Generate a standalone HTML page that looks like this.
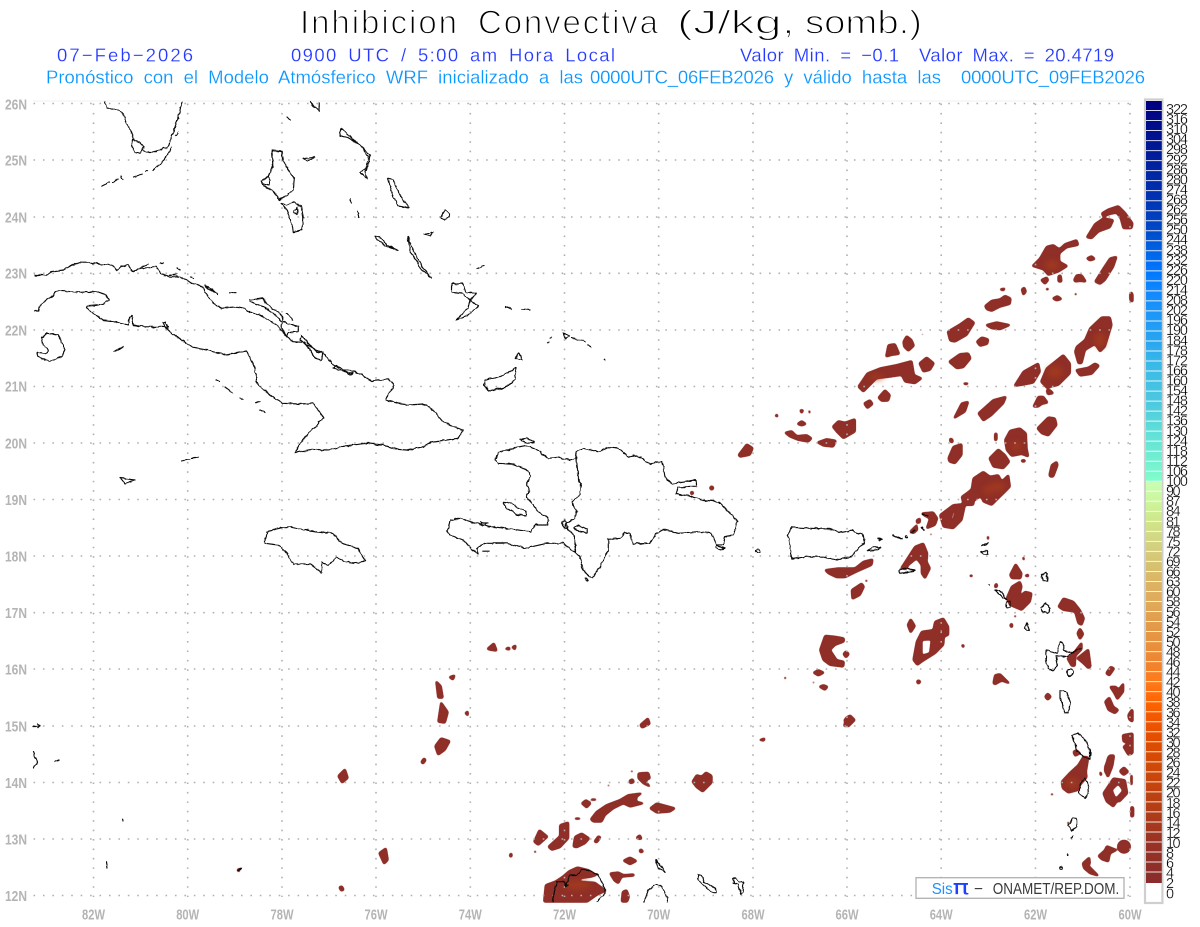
<!DOCTYPE html>
<html lang="es"><head><meta charset="utf-8"><title>Inhibicion Convectiva</title>
<style>html,body{margin:0;padding:0;background:#fff;width:1200px;height:927px;overflow:hidden}svg{display:block;font-family:"Liberation Sans",sans-serif}</style></head>
<body>
<svg width="1200" height="927" viewBox="0 0 1200 927" xmlns="http://www.w3.org/2000/svg">
<defs>
<linearGradient id="cb" gradientUnits="userSpaceOnUse" x1="0" y1="101" x2="0" y2="883">
<stop offset="0" stop-color="#00007f"/><stop offset=".0641" stop-color="#001a98"/><stop offset=".1282" stop-color="#0035b5"/><stop offset=".1667" stop-color="#004ac8"/><stop offset=".1923" stop-color="#0064e8"/><stop offset=".2179" stop-color="#0078ff"/><stop offset=".2436" stop-color="#1088ff"/><stop offset=".2692" stop-color="#1c95f8"/><stop offset=".3077" stop-color="#28a5f0"/><stop offset=".3333" stop-color="#38b8e8"/><stop offset=".3846" stop-color="#4cc8e0"/><stop offset=".4231" stop-color="#60dfd8"/><stop offset=".4615" stop-color="#74f0d0"/><stop offset=".4872" stop-color="#80ffcc"/>
<stop offset=".4872" stop-color="#c8ffb4"/><stop offset=".5128" stop-color="#cdf59c"/><stop offset=".5385" stop-color="#d0e688"/><stop offset=".5641" stop-color="#d3d480"/><stop offset=".5897" stop-color="#d6c472"/><stop offset=".6154" stop-color="#dcb464"/><stop offset=".641" stop-color="#e0aa5a"/><stop offset=".6667" stop-color="#e29c4c"/><stop offset=".6923" stop-color="#e8923e"/><stop offset=".7179" stop-color="#f08430"/><stop offset=".7436" stop-color="#ff7a1a"/><stop offset=".7692" stop-color="#ff6400"/><stop offset=".7949" stop-color="#f05400"/><stop offset=".8205" stop-color="#e04c00"/><stop offset=".8462" stop-color="#d24a06"/><stop offset=".8718" stop-color="#c8440c"/><stop offset=".8974" stop-color="#b83f12"/><stop offset=".9231" stop-color="#a83a1c"/><stop offset=".9487" stop-color="#983224"/><stop offset="1" stop-color="#8a2c2c"/>
</linearGradient>
<filter id="bl" x="-50%" y="-50%" width="200%" height="200%"><feGaussianBlur stdDeviation="3"/></filter>
<filter id="smooth" filterUnits="userSpaceOnUse" x="0" y="90" width="1200" height="837" color-interpolation-filters="sRGB">
<feGaussianBlur stdDeviation="1"/>
<feComponentTransfer><feFuncA type="linear" slope="5" intercept="-.9"/></feComponentTransfer>
</filter>
<filter id="wig" filterUnits="userSpaceOnUse" x="0" y="90" width="1200" height="837" color-interpolation-filters="sRGB">
<feTurbulence type="fractalNoise" baseFrequency=".2" numOctaves="2" seed="3" result="n"/>
<feDisplacementMap in="SourceGraphic" in2="n" scale="3" xChannelSelector="R" yChannelSelector="G"/>
</filter>
</defs>
<rect width="1200" height="927" fill="#fff"/>

<!-- Titles -->
<g font-size="33" fill="#000" stroke="#fff" stroke-width="1.2">
<text x="300" y="33.5" textLength="157">Inhibicion</text>
<text x="478" y="33.5" textLength="180">Convectiva</text>
<text x="677" y="33.5" textLength="118" lengthAdjust="spacingAndGlyphs">(J/kg,</text>
<text x="805" y="33.5" textLength="117" lengthAdjust="spacingAndGlyphs">somb.)</text>
</g>
<g font-size="18.5" fill="#2438ff" stroke="#fff" stroke-width=".2" word-spacing="4">
<text x="57" y="61.5" textLength="136">07−Feb−2026</text>
<text x="291" y="61.5" textLength="324">0900 UTC / 5:00 am Hora Local</text>
<text x="740" y="61.5" textLength="159">Valor Min. = −0.1</text>
<text x="919" y="61.5" textLength="195">Valor Max. = 20.4719</text>
</g>
<g font-size="18.5" fill="#0a96ff" stroke="#fff" stroke-width=".2" word-spacing="5">
<text x="46" y="83.5" textLength="537">Pronóstico con el Modelo Atmósferico WRF inicializado a las</text>
<text x="590" y="83.5" textLength="184">0000UTC_06FEB2026</text>
<text x="784" y="83.5" textLength="157">y válido hasta las</text>
<text x="961" y="83.5" textLength="184">0000UTC_09FEB2026</text>
</g>

<!-- Precip blobs -->
<g filter="url(#smooth)">
<g fill="#8f2f28" stroke="#8f2f28" stroke-linejoin="round">
<g transform="translate(780,200) scale(.33333)" stroke-width="2.5">
<path d="M920 112L945 72 970 55 1000 60 990 82 955 95 935 115ZM965 40L985 28 1015 18 1035 38 1058 70 1055 85 1030 85 1022 55 1010 38 990 42 970 50ZM757 198L780 175 800 140 820 135 838 148 855 132 890 120 895 135 860 142 838 160 838 185 862 198 835 215 805 225 790 208ZM920 175L935 168 945 177 930 182ZM945 245L970 205 990 175 1010 170 1000 200 975 240 960 252ZM783 240L800 232 805 240 795 252ZM835 228L842 225 845 245 835 245ZM882 240L890 225 905 225 918 245 900 243 885 245ZM660 268L675 265 670 272ZM725 268L733 262 738 275 730 285ZM799 266h6v3h-6ZM818 295L832 288 845 297 830 302ZM885 281h4v3h-4ZM1055 285L1058 282 1058 305 1054 298ZM615 318L635 302 660 298 675 287 692 295 690 312 660 320 635 333 620 328ZM618 375L650 367 690 375 660 388 635 385ZM503 395L540 373 565 355 583 368 560 405 525 425 510 422ZM590 425L605 412 625 418 622 432 600 438ZM507 485L540 462 565 460 572 475 550 502 530 505ZM885 455L890 440 915 420 930 385 965 352 990 352 995 375 975 440 960 455 945 432 915 450 905 490 895 490ZM888 510L925 503 945 490 957 497 935 522 900 527ZM783 545L800 505 850 465 870 490 870 520 835 555 800 563ZM703 558L730 515 775 490 780 515 760 548 725 555ZM800 570L810 570 820 580 803 583ZM760 620L775 590 790 590 803 608 785 612 775 620ZM595 640L640 600 678 590 670 610 635 645 610 662ZM522 655L545 610 565 605 555 635ZM772 685L805 652 825 655 830 675 805 707 785 700ZM628 775L655 748 675 765 688 785 670 805 640 800ZM505 775L520 740 545 732 545 765 525 790 508 785ZM510 715L518 718 518 728 510 725ZM645 700L650 700 650 720 645 722ZM725 780L735 780 735 785 725 785ZM808 825L815 795 830 785 833 795 820 830 810 830ZM545 892L575 868 580 835 610 815 630 830 655 825 665 845 685 825 690 860 665 885 635 905 600 890 585 900 560 900ZM235 560L262 520 300 505 350 495 395 483 402 525 425 535 405 550 375 545 365 525 330 530 290 535 250 575ZM318 470L325 435 345 432 358 462 335 465ZM370 425L380 408 395 420 402 437 385 453 372 440ZM418 490L440 472 462 490 450 510 430 515ZM295 593L315 570 330 585 325 602 305 603ZM252 610L270 600 278 612 262 625ZM158 680L175 663 195 668 225 657 225 695 190 715 170 695ZM15 698L35 693 50 708 80 705 95 715 85 725 55 720 30 710ZM112 727L140 717 168 722 160 740 130 737ZM52 672L65 663 78 672 65 677ZM60 630L70 630 65 640ZM88 630L90 640 87 638ZM426 402h3v2h-3ZM550 550L565 550 558 554Z"/>
<path fill-rule="evenodd" d="M675 720L690 692 720 685 738 700 740 745 745 770 725 762 695 768 680 750ZM705 712L710 712 710 732 705 732Z"/>
</g>
<g transform="translate(780,490) scale(.33333)" stroke-width="2.5">
<path fill-rule="evenodd" d="M480 75L520 45 550 42 545 20 575 0 600 10 585 10 580 45 555 45 545 90 520 115 490 110ZM510 90L520 60 528 65 520 90Z"/>
<path d="M600 10L680 0 635 45 610 35ZM425 70L460 67 472 85 465 105 440 115 450 85 435 78ZM410 90L420 85 420 98 410 98ZM390 125L410 105 412 120 400 130ZM622 140L626 140 624 150ZM451 132h4v2h-4ZM363 235L405 170 430 160 442 190 440 215 450 235 435 265 425 250 425 225 410 205 385 225 378 238ZM135 240L175 235 225 235 250 215 278 208 275 225 230 245 195 262 170 262 145 250ZM215 300L245 280 252 290 240 315 217 327ZM690 255L707 222 725 250 722 265 695 265ZM680 325L695 290 720 275 725 290 715 325 735 305 755 310 750 335 725 360 690 345ZM835 350L850 325 880 335 900 360 912 385 905 405 895 400 885 365 850 360ZM892 430L900 415 910 432 900 448ZM862 505L880 490 905 458 905 478 885 498 885 528 875 528ZM892 505L925 478 932 530 925 535 910 520ZM978 550L992 530 1003 535 988 557ZM990 590L1008 590 1015 600 1030 580 1030 605 1012 628 1003 610ZM975 635L988 622 1000 650 1015 660 1005 670 985 660ZM1045 680L1058 660 1058 695 1048 690ZM1028 735L1058 730 1058 790 1045 795 1030 770 1048 758 1030 755ZM975 835L985 800 1002 795 998 825 985 860 975 845ZM1020 845L1032 832 1042 845 1030 855ZM120 480L135 437 165 440 192 445 192 455 165 465 150 480 170 510 192 515 190 530 150 525 130 510ZM190 492L198 483 207 492 198 503ZM100 548L115 540 132 548 115 557ZM118 590L130 585 143 590 135 600ZM192 708L200 680 225 690 205 700 195 710ZM383 405L392 387 405 408 392 428ZM545 465L552 465 550 473ZM410 575L415 570 422 575 415 582ZM640 580L645 555 660 552 688 580 665 572 645 583ZM795 620L803 610 813 620 803 630ZM645 285L650 280 652 290 645 293ZM690 405L695 400 698 408 694 413ZM704 377h3v4h-3ZM570 256h7v3h-7ZM735 257L745 253 745 260ZM730 200L733 210 729 208ZM14 562h3v4h-3ZM99 576h3v3h-3ZM257 271h4v3h-4Z"/>
<path fill-rule="evenodd" d="M400 510L410 455 425 425 460 420 465 395 490 385 505 410 505 435 492 440 490 465 465 490 425 515 412 525ZM425 450L455 448 450 490 425 497ZM475 410L490 420 490 430 480 430Z"/>
</g>
<g transform="translate(1000,700) scale(.33333)" stroke-width="2.5">
<path d="M310 280L340 235 375 240 382 280 358 305 345 300 370 272 355 250 335 270 350 305 340 320 320 305ZM185 245L210 218 235 195 250 170 265 172 258 215 260 232 240 255 235 270 205 278 188 265ZM220 155L230 150 240 160 225 168ZM315 200L330 165 342 170 335 205 322 230ZM300 215L305 222 302 228ZM360 212L372 202 385 215 372 225ZM395 320L400 322 400 350 395 345ZM248 490L268 472 270 490 265 497 295 527 270 520 252 505ZM295 468L315 450 320 438 350 450 330 460 325 485 305 478ZM153 282h6v2h-6ZM202 367l5 1-2 4Z"/>
<circle cx="372" cy="440" r="18"/>
</g>
<g transform="translate(480,760) scale(.33333)" stroke-width="2.5">
<path d="M475 40L505 38 510 55 495 62 510 80 490 70 475 55ZM448 62L458 57 462 67 450 70ZM637 65L650 45 665 50 678 37 695 47 695 68 668 95 650 82ZM305 130L318 120 332 130 320 143ZM333 118h15v2h-15ZM332 178L350 155 380 135 420 120 445 105 485 100 470 110 468 125 490 130 450 140 430 130 400 145 375 165 365 185 340 185ZM510 145L530 130 585 145 570 155 530 158ZM285 175h15v2h-15ZM205 260L240 228 240 195 265 187 265 235 240 262 215 270ZM162 245L178 210 203 230 175 255ZM280 260L285 230 305 220 328 235 315 250 290 262ZM343 245L355 228 362 232 350 248ZM470 232L480 225 485 237 472 237ZM478 272L483 267 490 275 482 278ZM430 302L450 292 470 303 450 313ZM90 282L95 280 95 290 90 290ZM163 273L168 275 165 278ZM390 340L415 337 430 345 462 343 462 347 425 350 415 370 403 362ZM192 425L197 375 225 365 248 350 268 333 292 322 325 330 350 345 335 350 300 355 298 365 345 368 378 392 350 405 322 425ZM425 425L428 395 440 390 447 410 442 425ZM384 75h3v3h-3ZM453 33h5v2h-5Z"/>
</g>
<g stroke-width=".6">
<path d="M738.3 455L746.7 444 753 448 750 455 740 457ZM436 681L441 686 443 698 438 698ZM441 702L448 712 445 723 438 722ZM435 746L441 738 450 741 445 750 438 755ZM421 762L424 758 426 760 423 764ZM338 776L345 769 348 778 342 783ZM379 853L386 848 388 860 384 864ZM339 887L342 886 344 890 341 891ZM487 649L494 643 497 651 490 650ZM505 649L509 647 510 650ZM512 647L516 645 515 650ZM640 725L648 718 650 724 642 728ZM759 740L765 738 764 741ZM844 720L850 715 855 720 848 727ZM449 677L455 675 453 680ZM465 713L468 711 468 716ZM510 854l2 2-2 1ZM237 870l3-2-1 4ZM775 416l2-2 1 3ZM1130 293L1132 292 1132 302 1130 300ZM1128 715L1132 709 1132 722ZM1131 807L1132 807 1132 817 1131 817ZM1131 775h1v10h-1Z"/>
<circle cx="711.7" cy="488" r="1.8"/><circle cx="692" cy="493" r="1.4"/>
</g>
</g>
</g>
<g fill="#a83c1c" filter="url(#bl)" opacity=".7">
<ellipse cx="1052" cy="265" rx="7" ry="5"/><ellipse cx="1100" cy="340" rx="6" ry="7"/><ellipse cx="876" cy="377" rx="8" ry="3"/><ellipse cx="1016" cy="446" rx="5" ry="5"/><ellipse cx="997" cy="487" rx="8" ry="5"/><ellipse cx="1055" cy="372" rx="8" ry="6"/><ellipse cx="1072" cy="783" rx="7" ry="5"/><ellipse cx="577" cy="885" rx="14" ry="5"/><ellipse cx="988" cy="490" rx="5" ry="4"/>
</g>

<!-- Grid -->
<line x1="33" y1="101" x2="1132" y2="101" stroke="#f0f0f0" stroke-width="1"/>
<path fill="none" stroke="#b0b0b0" stroke-width="1.6" stroke-dasharray="1.6 7.83" d="M33.5 103.5H1132M33.5 160H1132M33.5 217H1132M33.5 273.3H1132M33.5 330H1132M33.5 386.5H1132M33.5 443H1132M33.5 499.5H1132M33.5 556H1132M33.5 612.7H1132M33.5 669H1132M33.5 726H1132M33.5 782.5H1132M33.5 839H1132M33.5 895.5H1132M93.5 103.5V897M187.7 103.5V897M282 103.5V897M376 103.5V897M470.3 103.5V897M564.5 103.5V897M658.7 103.5V897M753 103.5V897M847 103.5V897M941.2 103.5V897M1035.5 103.5V897M1130 103.5V897"/>

<!-- Coast -->
<g filter="url(#wig)">
<g fill="none" stroke="#0a0a0a" stroke-width="1.15" stroke-linejoin="round" stroke-linecap="round">
<path d="M105 102L107 108 115 109 123 113 125 119 129 127 133 137 134 140 139 142 144 147 142 150 147 152 157 152 163 148 167 148 170 143 172 135 175 127 178 118 182 102M133 140L132 145 134 152 140 153.3 144 147M102 186L110 182M113 182L118 179M121 176L123 180M133 177L142 174M146 172L148 171M153 170L160 165 167 156 172 147M176 136L178 133M177 120L179 118"/>
<path d="M271.7 150L281.7 151 283.3 160 288.3 170 294.3 178.3 293.3 190 285 196.7 279.3 200 273.3 191.7 263.3 185 261.7 181 268.3 176.7 273.3 163.3ZM268.3 176.7L270 180 269 185 264 184M281 203.3L286.7 205 293.3 201.7 301.7 206.7 303.3 218.3 301.7 230 293.3 231.7 291.7 223.3 286.7 210ZM293 212L298 207 297 215ZM302.7 158.3L315 156.7 308 161ZM340.7 128.3L343.3 130 350 136.7 361.7 146.7 370 155 368.3 165 365 171.7 366.7 178.3 360 172.3 366 168.3 368.3 156.7 360 145 348.3 137.7 340 135.7ZM388 178L393 180 400 195 409 208 398 206 392 193ZM350 199L352 203M357 211L359 217M375 236.7L380 236.7 386.7 245 398 250 386.7 246.7 378 241ZM310 102L315 107 319 110.7 319.3 102M287 117L290 120M408 237L413 250 421 265 431 278 420 268 410 250ZM424 234L433 232 431 236ZM445 210L450 215 445 220 441 218ZM477 268L484 266M452 284L462 283 466 292 477 293 470 300 478 306 468 315 456 320 468 308 470 300 462 293 452 292ZM505 307L512 309M522 309L530 310M485 380L500 376 510 372 516 367 515 380 505 388 488 391 484 385ZM515 358L519 353 522 360ZM563 333L570 336 566 339ZM572 338L585 342M587 345L591 347M604 359L605 360M547 343L549 342M550 338L552 337"/>
<path d="M35 275L41.7 275 46.7 275.7 50 271.7 63.3 270 71.7 265 80 262.7 90 262.7 100 264.3 111.7 265 116.7 270 121.7 266.7 128.3 265 132.7 271.7 140 268.3 150 267.7 156.7 266.7 160 273.3 170 276.7 180 276.7 193.3 283.3 203.3 286.7 205 291.7 213.3 303.3 221.7 308.3 236.7 306.7 245 308.3 248.3 311.7 260 315 276.7 325 286.7 336.7 293.3 341.7 303.3 342.3 313.3 348.3 323.3 353.3 333.3 365 343.3 370 353.3 370.7 361.7 375 371.7 381 388.3 379.3 393.3 383 393.3 388.3 388.3 393.3 386 400 391.7 401.7 398.3 403.3 408.3 405 423.3 404 433.3 410 443.3 421.7 453.3 426.7 463.3 430 458.3 438.3 446.7 440 431.7 441.7 423.3 446.7 406.7 450 396.7 449.3 383.3 445 366.7 443.3 346.7 445.7 328.3 450 311.7 449.3 295 452.7 300 443.3 311.7 430 323.3 418.3 318.3 410 313.3 403.3 300 404 281.7 403.3 270 395 258.3 385 256.7 381.7 255 368.3 246.7 351 226.7 355 206.7 350 193.3 347.7 181.7 340 170 331.7 165 326.7 163 322 166 322 168 327 143.3 326.7 133.3 325 131.7 315 129.5 317 128.3 325 116.7 321.7 103.3 320 93.3 313.3 86 308.3 86.7 305.7 103.3 304.3 109.3 300 106.7 295 96.7 291.7 80 292.3 56.7 290.7 53.3 295 41.7 303.3 38.3 311 35 311"/>
<path d="M46.7 333.3L58.3 335 65 350 61.7 356.7 50 361.7 38.3 356.7 37.3 352.3 45 353.3 48.3 350 43.3 345 41.7 338.3ZM113.3 351.7L122.7 346.7 118 351ZM216 380L220 382M225 387L233 393M255 402.7L260 402M260 410L265 412M240 398L243 399M142 267L148 264M160 263L163 263M177 268L180 270M170 275L177 274M190 277L193 278M205 285L218 294 208 289ZM230 292.3L236 292.7M249.3 300L263.3 298.3 266.7 304.3 276.7 311.7 281.7 315 283.3 321.7 298.3 326.7 298.3 331.7 288.3 332.3 286.7 336.7 281.7 328.3 281.7 321.7 273.3 313.3 263.3 306.7 250 301.7ZM286.7 313L292.7 320M301.7 335L306.7 341.7 316.7 351.7 322.7 353.3 321.7 360 315 358.3 308.3 346.7 300 340ZM333 368L337 365 343 370 348 373 353 372 350 375 340 370Z"/>
<path d="M495 460L498.3 452.7 513.3 448.3 526.7 446 536.7 449.3 548.3 458.3 556.7 457.3 570 460 575 458.3 576.7 451.7 583.3 448.3 598.3 451.7 608.3 447.7 618.3 448.3 628.3 456.7 636.7 455 650 464 661.7 461 665 476.7 671.7 484 686.7 481.7 696 479.3 696.7 486.7 678.3 487.3 676 494 690 496 703.3 500 718.3 501.7 730 513.3 737.3 521.7 733.3 535 725 536.7 723.3 545 716.7 545 711.7 533.3 698.3 531.7 678.3 533.3 663.3 529.3 656 533.3 650 543.3 633.3 544 630 533.3 625 532.7 620 538.3 608.3 539.3 608.3 550 600 566.7 592.7 577.3 589.3 576.7 583.3 570 580 556.7 575 552.7 563.3 543.3 546.7 543.3 525 548.3 506.7 543.3 485 543.3 476.7 548.3 478.3 554 473.3 550 463.3 540 450 535 447.3 531.7 450 520.7 460 518.3 476.7 523.3 486.7 526 513.3 529.3 530 531.7 535 525 547.7 525 548.3 518.3 538.3 511.7 526.7 496.7 529.3 488.3 526.7 483.3 531 476 526.7 470 513.3 464.3 498.3 463.3ZM576 455L578.3 476.7 581 486.7 580 495 571.7 501.7 576.7 511.7 575 518.3 565 523.3 566.7 528.3 575 536.7 575 552.7M503.3 503.3L508.3 501.7 516.7 506.7 526 511.7 526 516 516.7 514.3 506.7 508.3ZM573.3 528.3L578.3 525 586.7 529.3 586.7 532.7 580 531.7ZM561.7 521.7L565 520 568.3 528.3 565 528.3ZM520 439.3L526.7 438.3 534.3 442.3 526.7 442.7ZM480 521.7L483 523 488 523 483 526ZM483.3 551.7L489.3 551.7M716.7 545.7L725 548.3 720 550 716 548Z"/>
<circle cx="586.7" cy="579.5" r="1"/><ellipse cx="757.7" cy="551" rx="2.2" ry="1.4"/>
<path d="M265 540L266.7 531.7 283.3 527.3 291.7 526.7 305 530 332.7 533.3 341.7 543.3 358.3 548.3 366 561.7 353.3 563.3 343.3 561.7 336.7 556.7 328.3 565 321.7 562.7 321.7 572.7 318.3 570 310 564 293.3 564 286.7 553.3 278.3 545 265 543.3Z"/>
<path d="M791.7 527.3L810 528.3 830 529 841.7 532.3 851.7 530.7 863.3 535 865 543.3 858.3 548.3 851.7 556.7 836.7 560 823.3 556.7 806.7 556.7 791.7 559 789.3 540 787.3 535ZM867.3 550.7L873.3 546.7 880.7 548.3 875 550ZM878.3 537.7L881.7 539.3 880 540ZM892.7 535.3L901.7 538.3 896.7 537.7ZM910 532.7L915 530M921.7 527.3L924 530 923 527ZM922.7 514.3L928.3 516M899.3 570L905 568.3 915 570 906.7 572.3 900 573.3ZM981.7 546L988.3 541.7 986 545ZM981.7 551.7L986.7 550 988.3 554.3 983.3 554ZM1041.7 574L1046.7 573.3 1048.3 580.7 1043.3 580.7ZM995 590L1000 590.7 1007.3 599.3 1001.7 596.7ZM1006 601.7H1010V607.3H1006ZM1025 628.3L1026.7 623.3 1029.3 630 1026.7 630.7ZM1041 607.3L1045 603.3 1050 608.3 1047.7 613.3 1042.7 611.7ZM1046.7 650L1056.7 653.3 1060 641.7 1063.3 643.3 1063.3 650 1073.3 653.3 1063.3 656.7 1056 655.7 1057.3 663.3 1053.3 671.7 1048.3 668.3 1045.7 660ZM1060 690.7L1066.7 691.7 1070.7 703.3 1068.3 713.3 1065 713.3 1060 698.3ZM1071.7 735L1078.3 733.3 1085 740 1090 750 1090 759.3 1083.3 756 1076.7 751.7 1075 743.3ZM1085 777.7L1087.7 783.3 1088.3 793.3 1085 798.3 1079 793.3 1080 785ZM1072.7 818.3L1076.7 818.3 1076.7 826.7 1071.7 830.7 1068.3 825ZM1071 837L1073 836M1067.5 856L1068 854M1073 652L1081 648M989 585h.6"/>
<circle cx="1070" cy="672.7" r="3.3"/><circle cx="906.7" cy="537" r="1.3"/><circle cx="1061" cy="868" r="1.3"/>
<path d="M552.3 901.7L556.7 881.7 565 881.7 565 886.7 570 875 576.7 875 581.7 869.3 588.3 870 598.3 875 605 888.3 605 893.3 596.7 901.7M565 881.7L568 885 565 886.7M655.7 860L663.3 869.3 664.3 871.7 658.3 868.3ZM644.3 901.7L648.3 890 656.7 884 661.7 886.7 666.7 896.7 667.7 901.7M697.7 875L701.7 875 704 881.7 715 888.3 716.7 892.7 711.7 892.7 703.3 885 698.3 880ZM733.3 879.3L736 877.3 738.3 881.7 743.3 882.7 742.7 891.7 740.7 894.3 738.3 885 734 883.3Z"/>
<path d="M33 726L40 726M37 723.5L40 726 37 728M33 752L37 762 34 768M55 762L59 760M120 478L135 480 125 484ZM182 461L190 459M192 458L198 457M106 862L107 868M122 818L122.5 821M238 871L241 868"/>
</g>
</g>

<!-- Axis labels -->
<g font-size="15" font-weight="bold" fill="#b4b4b4">
<text x="5" y="109.5" textLength="22" lengthAdjust="spacingAndGlyphs">26N</text>
<text x="5" y="165.5" textLength="22" lengthAdjust="spacingAndGlyphs">25N</text>
<text x="5" y="222.5" textLength="22" lengthAdjust="spacingAndGlyphs">24N</text>
<text x="5" y="278.5" textLength="22" lengthAdjust="spacingAndGlyphs">23N</text>
<text x="5" y="335.5" textLength="22" lengthAdjust="spacingAndGlyphs">22N</text>
<text x="5" y="391.5" textLength="22" lengthAdjust="spacingAndGlyphs">21N</text>
<text x="5" y="448.5" textLength="22" lengthAdjust="spacingAndGlyphs">20N</text>
<text x="5" y="505" textLength="22" lengthAdjust="spacingAndGlyphs">19N</text>
<text x="5" y="561.5" textLength="22" lengthAdjust="spacingAndGlyphs">18N</text>
<text x="5" y="618" textLength="22" lengthAdjust="spacingAndGlyphs">17N</text>
<text x="5" y="674.5" textLength="22" lengthAdjust="spacingAndGlyphs">16N</text>
<text x="5" y="731.5" textLength="22" lengthAdjust="spacingAndGlyphs">15N</text>
<text x="5" y="788" textLength="22" lengthAdjust="spacingAndGlyphs">14N</text>
<text x="5" y="844.5" textLength="22" lengthAdjust="spacingAndGlyphs">13N</text>
<text x="5" y="901" textLength="22" lengthAdjust="spacingAndGlyphs">12N</text>
<text x="82" y="919.5" textLength="23" lengthAdjust="spacingAndGlyphs">82W</text>
<text x="176.2" y="919.5" textLength="23" lengthAdjust="spacingAndGlyphs">80W</text>
<text x="270.5" y="919.5" textLength="23" lengthAdjust="spacingAndGlyphs">78W</text>
<text x="364.5" y="919.5" textLength="23" lengthAdjust="spacingAndGlyphs">76W</text>
<text x="458.8" y="919.5" textLength="23" lengthAdjust="spacingAndGlyphs">74W</text>
<text x="553" y="919.5" textLength="23" lengthAdjust="spacingAndGlyphs">72W</text>
<text x="647.2" y="919.5" textLength="23" lengthAdjust="spacingAndGlyphs">70W</text>
<text x="741.5" y="919.5" textLength="23" lengthAdjust="spacingAndGlyphs">68W</text>
<text x="835.5" y="919.5" textLength="23" lengthAdjust="spacingAndGlyphs">66W</text>
<text x="929.7" y="919.5" textLength="23" lengthAdjust="spacingAndGlyphs">64W</text>
<text x="1024" y="919.5" textLength="23" lengthAdjust="spacingAndGlyphs">62W</text>
<text x="1118.5" y="919.5" textLength="23" lengthAdjust="spacingAndGlyphs">60W</text>
</g>

<!-- Logo box -->
<rect x="916" y="877.7" width="208" height="20.6" fill="#fff" stroke="#b0b0b0" stroke-width="1.3"/>
<text x="931.7" y="894" font-size="16" fill="#1e90ff" textLength="21" lengthAdjust="spacingAndGlyphs">Sis</text>
<text x="952.7" y="894" font-size="20" fill="#2040ff" font-family="DejaVu Sans" textLength="16.5" lengthAdjust="spacingAndGlyphs">π</text>
<text x="974" y="894" font-size="16" fill="#3a3a3a" textLength="9" lengthAdjust="spacingAndGlyphs">−</text>
<text x="992.7" y="894" font-size="16" fill="#3a3a3a" textLength="126.6" lengthAdjust="spacingAndGlyphs">ONAMET/REP.DOM.</text>

<!-- Color bar -->
<rect x="1145" y="99.5" width="17.4" height="803.5" fill="#fff" stroke="#cfcfcf" stroke-width="2.2"/>
<rect x="1146" y="101" width="15.8" height="782" fill="url(#cb)"/>
<line x1="1153.9" y1="101" x2="1153.9" y2="873" stroke="#fff" stroke-width="15.8" stroke-opacity=".85" stroke-dasharray="1 9.02" stroke-dashoffset="-9.02"/>
<g font-size="14.5" fill="#000" stroke="#fff" stroke-width=".25">
<text x="1166" y="114" textLength="22">322</text><text x="1166" y="124.1" textLength="22">316</text><text x="1166" y="134.1" textLength="22">310</text><text x="1166" y="144.2" textLength="22">304</text><text x="1166" y="154.2" textLength="22">298</text><text x="1166" y="164.3" textLength="22">292</text><text x="1166" y="174.3" textLength="22">286</text><text x="1166" y="184.4" textLength="22">280</text><text x="1166" y="194.4" textLength="22">274</text><text x="1166" y="204.5" textLength="22">268</text><text x="1166" y="214.6" textLength="22">262</text><text x="1166" y="224.6" textLength="22">256</text><text x="1166" y="234.7" textLength="22">250</text><text x="1166" y="244.7" textLength="22">244</text><text x="1166" y="254.8" textLength="22">238</text><text x="1166" y="264.8" textLength="22">232</text><text x="1166" y="274.9" textLength="22">226</text><text x="1166" y="284.9" textLength="22">220</text><text x="1166" y="295" textLength="22">214</text><text x="1166" y="305" textLength="22">208</text><text x="1166" y="315.1" textLength="22">202</text><text x="1166" y="325.2" textLength="22">196</text><text x="1166" y="335.2" textLength="22">190</text><text x="1166" y="345.3" textLength="22">184</text><text x="1166" y="355.3" textLength="22">178</text><text x="1166" y="365.4" textLength="22">172</text><text x="1166" y="375.4" textLength="22">166</text><text x="1166" y="385.5" textLength="22">160</text><text x="1166" y="395.5" textLength="22">154</text><text x="1166" y="405.6" textLength="22">148</text><text x="1166" y="415.7" textLength="22">142</text><text x="1166" y="425.7" textLength="22">136</text><text x="1166" y="435.8" textLength="22">130</text><text x="1166" y="445.8" textLength="22">124</text><text x="1166" y="455.9" textLength="22">118</text><text x="1166" y="465.9" textLength="22">112</text><text x="1166" y="476" textLength="22">106</text><text x="1166" y="486" textLength="22">100</text>
<text x="1166" y="496.1" textLength="14.6">90</text><text x="1166" y="506.1" textLength="14.6">87</text><text x="1166" y="516.2" textLength="14.6">84</text><text x="1166" y="526.3" textLength="14.6">81</text><text x="1166" y="536.3" textLength="14.6">78</text><text x="1166" y="546.4" textLength="14.6">75</text><text x="1166" y="556.4" textLength="14.6">72</text><text x="1166" y="566.5" textLength="14.6">69</text><text x="1166" y="576.5" textLength="14.6">66</text><text x="1166" y="586.6" textLength="14.6">63</text><text x="1166" y="596.6" textLength="14.6">60</text><text x="1166" y="606.7" textLength="14.6">58</text><text x="1166" y="616.8" textLength="14.6">56</text><text x="1166" y="626.8" textLength="14.6">54</text><text x="1166" y="636.9" textLength="14.6">52</text><text x="1166" y="646.9" textLength="14.6">50</text><text x="1166" y="657" textLength="14.6">48</text><text x="1166" y="667" textLength="14.6">46</text><text x="1166" y="677.1" textLength="14.6">44</text><text x="1166" y="687.1" textLength="14.6">42</text><text x="1166" y="697.2" textLength="14.6">40</text><text x="1166" y="707.2" textLength="14.6">38</text><text x="1166" y="717.3" textLength="14.6">36</text><text x="1166" y="727.4" textLength="14.6">34</text><text x="1166" y="737.4" textLength="14.6">32</text><text x="1166" y="747.5" textLength="14.6">30</text><text x="1166" y="757.5" textLength="14.6">28</text><text x="1166" y="767.6" textLength="14.6">26</text><text x="1166" y="777.6" textLength="14.6">24</text><text x="1166" y="787.7" textLength="14.6">22</text><text x="1166" y="797.7" textLength="14.6">20</text><text x="1166" y="807.8" textLength="14.6">18</text><text x="1166" y="817.9" textLength="14.6">16</text><text x="1166" y="827.9" textLength="14.6">14</text><text x="1166" y="838" textLength="14.6">12</text><text x="1166" y="848" textLength="14.6">10</text>
<text x="1166" y="858.1">8</text><text x="1166" y="868.1">6</text><text x="1166" y="878.2">4</text><text x="1166" y="888.2">2</text><text x="1166" y="898.3">0</text>
</g>
</svg>
</body></html>
